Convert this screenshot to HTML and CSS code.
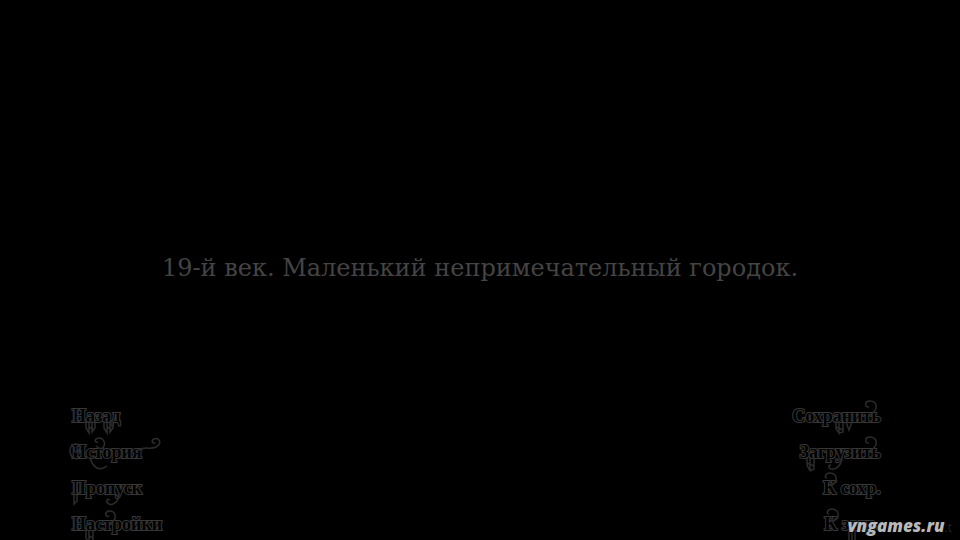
FILE: index.html
```html
<!DOCTYPE html>
<html lang="ru">
<head>
    <meta charset="UTF-8">
    <meta name="viewport" content="width=device-width, initial-scale=1.0">
    <title>Новелла</title>
    <link rel="stylesheet" href="styles.css">
</head>
<body>
    <main class="scene">
        <p class="narration">19-й век. Маленький непримечательный городок.</p>
    </main>

    <nav class="quick-menu">
        <div class="menu-column">
            <button class="menu-button" type="button">Назад
                <svg class="ornament" viewBox="0 0 92 44" aria-hidden="true">
                    <path d="M14 23v7l3 5v-12M20 23v11l3-4v-7M17 29l4 2M32 23v7l3 5v-12M38 23v11l3-4v-7M35 29l4 2M2 11v13M6 12v12"/>
                </svg>
            </button>
            <button class="menu-button" type="button">История
                <svg class="ornament" viewBox="0 0 92 44" aria-hidden="true">
                    <path d="M5 25C-3 24-5 12 3 10c6-1 7 7 2 8c-3 0-4-3-2-5M18 23c2 10 9 15 17 9M31 14c4-6-1-12-7-9c-2 2 0 4 2 3M24 12c3 3 5 3 7 2M66 16c8-4 12 0 18-3c7-4 3-10-2-8c-3 1-2 5 1 4"/>
                </svg>
            </button>
            <button class="menu-button" type="button">Пропуск
                <svg class="ornament" viewBox="0 0 92 44" aria-hidden="true">
                    <path d="M2 12v22l3-3v-18M8 12v13M47 23c0 8-5 13-10 11c-4-2-2-6 1-4"/>
                </svg>
            </button>
            <button class="menu-button" type="button">Настройки
                <svg class="ornament" viewBox="0 0 92 44" aria-hidden="true">
                    <path d="M2 11v13M6 12v12M14 24v8l3 5v-13M21 24v14M17 30l4 2M38 17c8-3 6-13-1-12c-5 1-4 7 0 5"/>
                </svg>
            </button>
        </div>
        <div class="menu-column menu-column-right">
            <button class="menu-button" type="button">Сохранить
                <svg class="ornament" viewBox="0 0 92 44" aria-hidden="true">
                    <path d="M47 23v8l3 4v-12M54 23v11l-4 1M47 29l7 3M57 24l3 8l3-8M80 17c10-4 9-14 1-14c-6 0-5 7-1 6"/>
                </svg>
            </button>
            <button class="menu-button" type="button">Загрузить
                <svg class="ornament" viewBox="0 0 92 44" aria-hidden="true">
                    <path d="M18 23v8l3 6v-14M25 23v12l-4 2M18 29l7 3M53 23c0 8-6 13-11 12c-3-1-3-4 0-4M80 17c10-4 9-14 1-14c-6 0-5 7-1 6"/>
                </svg>
            </button>
            <button class="menu-button" type="button">К сохр.
                <svg class="ornament" viewBox="0 0 92 44" aria-hidden="true">
                    <path d="M40 15c10-1 9-12 1-12c-5 0-6 5-3 5"/>
                </svg>
            </button>
            <button class="menu-button" type="button">К загр.
                <svg class="ornament" viewBox="0 0 92 44" aria-hidden="true">
                    <path d="M42 15c10-1 9-12 1-12c-5 0-6 5-3 5M60 24v13M63 24v14M66 24v12"/>
                </svg>
            </button>
        </div>
    </nav>

    <a class="site-mark" href="#">vngames.ru<span class="site-mark-tail">.t</span></a>
</body>
</html>
```

FILE: styles.css
```css
* {
    box-sizing: border-box;
}
body {
    display: flex;
    flex-direction: column;
    height: 100vh;
    margin: 0;
    overflow: hidden;
    position: relative;
    background-color: #000;
    color: #444;
}
.scene {
    flex: 1;
    display: flex;
    align-items: flex-end;
    justify-content: center;
    padding-bottom: 112px;
}
.narration {
    margin: 0;
    font-family: "DejaVu Serif", serif;
    font-size: 24px;
    line-height: 36px;
    white-space: nowrap;
}
.quick-menu {
    display: flex;
    justify-content: space-between;
    padding: 0 8.25% 0 7.5%;
    height: 142px;
}
.menu-column {
    display: flex;
    flex-direction: column;
    align-items: flex-start;
}
.menu-column-right {
    align-items: flex-end;
}
.menu-button {
    position: relative;
    flex: none;
    height: 36px;
    padding: 0;
    border: none;
    background: none;
    color: #000;
    font-family: "Liberation Serif", serif;
    font-size: 18px;
    font-weight: bold;
    line-height: 36px;
    white-space: nowrap;
    cursor: pointer;
    -webkit-text-stroke: 2px #383838;
    paint-order: stroke fill;
}
.menu-button:hover {
    color: #444;
}
.ornament {
    position: absolute;
    top: 0;
    left: 0;
    width: 92px;
    height: 44px;
    overflow: visible;
    fill: none;
    stroke: #2c2c2c;
    stroke-width: 1.5;
}
.menu-column-right .ornament {
    left: auto;
    right: 0;
}
.site-mark {
    position: absolute;
    right: 8px;
    bottom: 2px;
    color: #b8b8b8;
    font-family: "Open Sans", sans-serif;
    font-size: 17px;
    font-style: italic;
    font-weight: 800;
    line-height: 20px;
    text-decoration: none;
    text-shadow: 0 0 2px #000;
}
.site-mark-tail {
    color: #222;
    font-size: 12px;
    font-style: normal;
    font-weight: normal;
}
```
